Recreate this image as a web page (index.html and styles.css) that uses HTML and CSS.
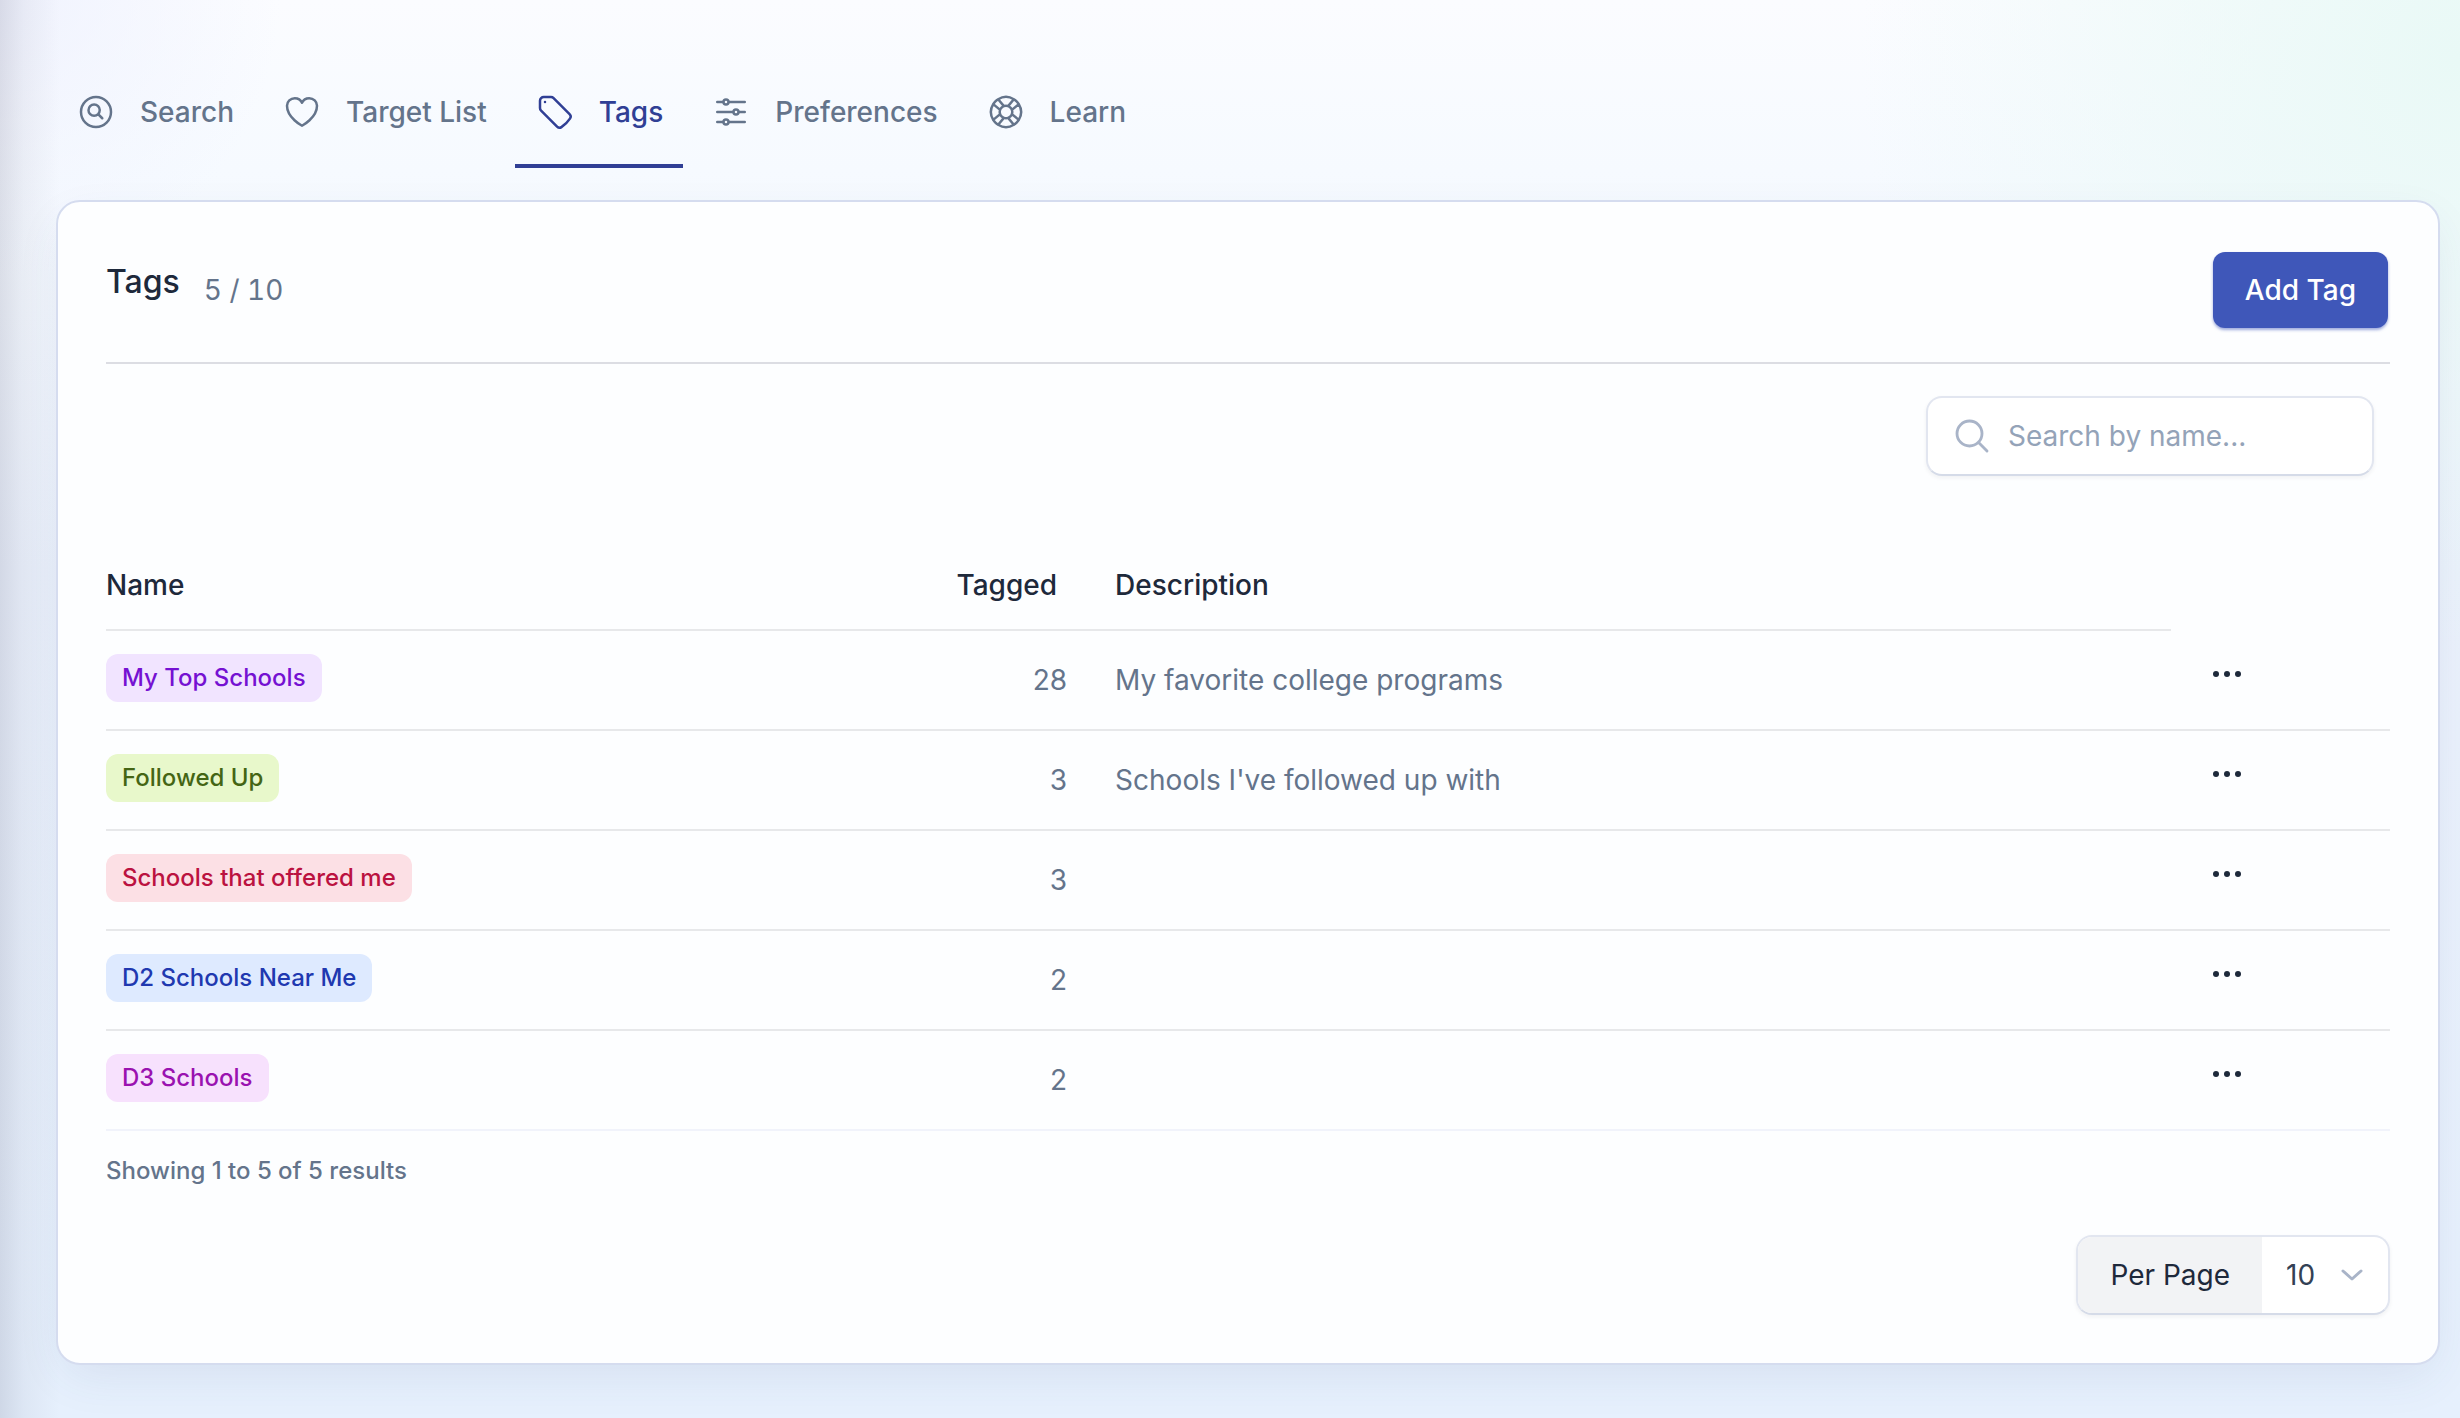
FILE: index.html
```html
<!DOCTYPE html>
<html lang="en">
<head>
  <meta charset="UTF-8">
  <meta name="viewport" content="width=device-width, initial-scale=1.0">
  <title>Tags</title>
  <link rel="stylesheet" href="styles.css">
</head>
<body>
  <div class="page">
    <nav class="tabs">
      <a href="#search" class="tab">
        <svg class="icon" viewBox="0 0 24 24"><path d="m15.75 15.75-2.489-2.489m0 0a3.375 3.375 0 1 0-4.773-4.773 3.375 3.375 0 0 0 4.774 4.774ZM21 12a9 9 0 1 1-18 0 9 9 0 0 1 18 0Z"/></svg>
        <span>Search</span>
      </a>
      <a href="#targets" class="tab">
        <svg class="icon" viewBox="0 0 24 24"><path d="M21 8.25c0-2.485-2.099-4.5-4.688-4.5-1.935 0-3.597 1.126-4.312 2.733-.715-1.607-2.377-2.733-4.313-2.733C5.1 3.75 3 5.765 3 8.25c0 7.22 9 12 9 12s9-4.78 9-12Z"/></svg>
        <span>Target List</span>
      </a>
      <a href="#tags" class="tab tab-active" aria-current="page">
        <svg class="icon" viewBox="0 0 24 24"><path d="M9.568 3H5.25A2.25 2.25 0 0 0 3 5.25v4.318c0 .597.237 1.17.659 1.591l9.581 9.581c.699.699 1.78.872 2.607.33a18.095 18.095 0 0 0 5.223-5.223c.542-.827.369-1.908-.33-2.607L11.16 3.66A2.25 2.25 0 0 0 9.568 3Z"/><path d="M6 6h.008v.008H6V6Z"/></svg>
        <span>Tags</span>
      </a>
      <a href="#preferences" class="tab">
        <svg class="icon" viewBox="0 0 24 24"><path d="M10.5 6h9.75M10.5 6a1.5 1.5 0 1 1-3 0m3 0a1.5 1.5 0 1 0-3 0M3.75 6H7.5m3 12h9.75m-9.75 0a1.5 1.5 0 0 1-3 0m3 0a1.5 1.5 0 0 0-3 0m-3.75 0H7.5m9-6h3.75m-3.75 0a1.5 1.5 0 0 1-3 0m3 0a1.5 1.5 0 0 0-3 0m-9.75 0h9.75"/></svg>
        <span>Preferences</span>
      </a>
      <a href="#learn" class="tab">
        <svg class="icon" viewBox="0 0 24 24"><path d="M16.712 4.33a9.027 9.027 0 0 1 1.652 1.306c.51.51.944 1.064 1.306 1.652M16.712 4.33l-3.448 4.138m3.448-4.138a9.014 9.014 0 0 0-9.424 0M19.67 7.288l-4.138 3.448m4.138-3.448a9.014 9.014 0 0 1 0 9.424m-4.138-5.976a3.736 3.736 0 0 0-.88-1.388 3.737 3.737 0 0 0-1.388-.88m2.268 2.268a3.765 3.765 0 0 1 0 2.528m-2.268-4.796a3.765 3.765 0 0 0-2.528 0m4.796 4.796c-.181.506-.475.982-.88 1.388a3.736 3.736 0 0 1-1.388.88m2.268-2.268 4.138 3.448m0 0a9.027 9.027 0 0 1-1.306 1.652c-.51.51-1.064.944-1.652 1.306m0 0-3.448-4.138m3.448 4.138a9.014 9.014 0 0 1-9.424 0m5.976-4.138a3.765 3.765 0 0 1-2.528 0m0 0a3.736 3.736 0 0 1-1.388-.88 3.737 3.737 0 0 1-.88-1.388m2.268 2.268L7.288 19.67m0 0a9.024 9.024 0 0 1-1.652-1.306 9.027 9.027 0 0 1-1.306-1.652m0 0 4.138-3.448M4.33 16.712a9.014 9.014 0 0 1 0-9.424m4.138 5.976a3.765 3.765 0 0 1 0-2.528m0 0c.181-.506.475-.982.88-1.388a3.736 3.736 0 0 1 1.388-.88m-2.268 2.268L4.33 7.288m6.406 1.18L7.288 4.33m0 0a9.024 9.024 0 0 0-1.652 1.306A9.025 9.025 0 0 0 4.33 7.288"/></svg>
        <span>Learn</span>
      </a>
    </nav>

    <main class="card">
      <header class="card-header">
        <div class="heading">
          <h1>Tags</h1>
          <span class="count">5 / 10</span>
        </div>
        <button type="button" class="btn-primary">Add Tag</button>
      </header>

      <div class="toolbar">
        <label class="search">
          <svg class="search-icon" viewBox="0 0 24 24"><path d="m21 21-5.197-5.197m0 0A7.5 7.5 0 1 0 5.196 5.196a7.5 7.5 0 0 0 10.607 10.607Z"/></svg>
          <input type="search" placeholder="Search by name..." aria-label="Search by name">
        </label>
      </div>

      <table class="tags-table">
        <thead>
          <tr>
            <th class="col-name">Name</th>
            <th class="col-tagged">Tagged</th>
            <th class="col-description">Description</th>
            <td class="col-actions"></td>
          </tr>
        </thead>
        <tbody>
          <tr>
            <td><span class="badge badge-violet">My Top Schools</span></td>
            <td class="number">28</td>
            <td class="description">My favorite college programs</td>
            <td class="actions"><button type="button" class="btn-more" aria-label="Actions"><svg viewBox="0 0 40 24"><circle cx="9" cy="12" r="3"/><circle cx="20" cy="12" r="3"/><circle cx="31" cy="12" r="3"/></svg></button></td>
          </tr>
          <tr>
            <td><span class="badge badge-lime">Followed Up</span></td>
            <td class="number">3</td>
            <td class="description">Schools I've followed up with</td>
            <td class="actions"><button type="button" class="btn-more" aria-label="Actions"><svg viewBox="0 0 40 24"><circle cx="9" cy="12" r="3"/><circle cx="20" cy="12" r="3"/><circle cx="31" cy="12" r="3"/></svg></button></td>
          </tr>
          <tr>
            <td><span class="badge badge-rose">Schools that offered me</span></td>
            <td class="number">3</td>
            <td class="description"></td>
            <td class="actions"><button type="button" class="btn-more" aria-label="Actions"><svg viewBox="0 0 40 24"><circle cx="9" cy="12" r="3"/><circle cx="20" cy="12" r="3"/><circle cx="31" cy="12" r="3"/></svg></button></td>
          </tr>
          <tr>
            <td><span class="badge badge-blue">D2 Schools Near Me</span></td>
            <td class="number">2</td>
            <td class="description"></td>
            <td class="actions"><button type="button" class="btn-more" aria-label="Actions"><svg viewBox="0 0 40 24"><circle cx="9" cy="12" r="3"/><circle cx="20" cy="12" r="3"/><circle cx="31" cy="12" r="3"/></svg></button></td>
          </tr>
          <tr>
            <td><span class="badge badge-fuchsia">D3 Schools</span></td>
            <td class="number">2</td>
            <td class="description"></td>
            <td class="actions"><button type="button" class="btn-more" aria-label="Actions"><svg viewBox="0 0 40 24"><circle cx="9" cy="12" r="3"/><circle cx="20" cy="12" r="3"/><circle cx="31" cy="12" r="3"/></svg></button></td>
          </tr>
        </tbody>
      </table>

      <footer class="card-footer">
        <p class="results">Showing 1 to 5 of 5 results</p>
        <div class="per-page">
          <label for="per-page">Per Page</label>
          <div class="select">
            <select id="per-page">
              <option>10</option>
              <option>25</option>
              <option>50</option>
            </select>
            <svg class="chevron" viewBox="0 0 24 12"><path d="m3 2 9 8 9-8"/></svg>
          </div>
        </div>
      </footer>
    </main>
  </div>
</body>
</html>
```
FILE: styles.css
```css
* {
  box-sizing: border-box;
}

body {
  margin: 0;
  min-height: 100vh;
  font-family: Inter, "Liberation Sans", sans-serif;
  font-size: 28px;
  line-height: 40px;
  color: #1e293b;
  background:
    linear-gradient(to right, rgba(50, 50, 80, 0.13), rgba(50, 50, 80, 0.05) 24px, rgba(50, 50, 80, 0) 60px),
    radial-gradient(circle at 100% 4%, #e9f9f6, rgba(233, 249, 246, 0) 600px),
    radial-gradient(circle at 0 0, #f0f3fe, rgba(240, 243, 254, 0) 280px),
    linear-gradient(to bottom, #fbfcff, #f6faff 12%, #ebf1fc 40%, #e6f0fd);
}

.page {
  padding: 56px 20px 54px 56px;
}

.tabs {
  display: flex;
  gap: 8px;
  margin-bottom: 32px;
}

.tab {
  display: flex;
  align-items: center;
  gap: 24px;
  height: 112px;
  padding: 4px 20px 0;
  border-bottom: 4px solid transparent;
  color: #64748b;
  font-weight: 500;
  text-decoration: none;
}

.tab-active {
  color: #303f95;
  border-bottom-color: #303f95;
}

.icon {
  width: 40px;
  height: 40px;
  fill: none;
  stroke: currentColor;
  stroke-width: 1.5;
  stroke-linecap: round;
  stroke-linejoin: round;
}

.card {
  padding: 48px;
  background: #fdfeff;
  border: 2px solid #d5dcef;
  border-radius: 24px;
  box-shadow: 0 16px 48px -8px rgba(60, 80, 120, 0.1);
}

.card-header {
  display: flex;
  justify-content: space-between;
  align-items: flex-start;
  padding-bottom: 32px;
  border-bottom: 2px solid #dcdde3;
}

.heading {
  display: flex;
  gap: 24px;
  padding-top: 8px;
}

h1 {
  margin: 0;
  font-size: 32px;
  font-weight: 500;
  line-height: 48px;
}

.count {
  padding-top: 12px;
  color: #64748b;
  font-variant-numeric: tabular-nums;
}

.btn-primary {
  height: 76px;
  margin: 2px;
  padding: 0 32px;
  border: 0;
  border-radius: 12px;
  background: #3f57b9;
  box-shadow: 0 2px 3px rgba(63, 87, 185, 0.5);
  color: #fff;
  font: inherit;
  font-weight: 500;
}

.toolbar {
  display: flex;
  justify-content: flex-end;
  padding: 32px 16px 64px 0;
}

.search {
  display: flex;
  align-items: center;
  gap: 16px;
  width: 448px;
  height: 80px;
  padding: 0 24px;
  background: #fff;
  border: 2px solid #e2e6f0;
  border-bottom-color: #d5dbe8;
  border-radius: 16px;
  box-shadow: 0 2px 4px rgba(30, 41, 59, 0.06);
}

.search-icon {
  flex: none;
  width: 40px;
  height: 40px;
  fill: none;
  stroke: #a9b4c8;
  stroke-width: 1.7;
  stroke-linecap: round;
}

.search input {
  width: 100%;
  padding: 0;
  border: 0;
  outline: 0;
  background: none;
  font: inherit;
}

.search input::placeholder {
  color: #94a3b8;
}

.tags-table {
  width: 100%;
  border-collapse: collapse;
  table-layout: fixed;
}

.tags-table th {
  height: 90px;
  padding: 0;
  border-bottom: 2px solid #e7e8ea;
  font-weight: 500;
  text-align: left;
}

.col-name {
  width: 37%;
}

.tags-table .col-tagged {
  width: 164px;
  padding-right: 58px;
  text-align: right;
}

.col-actions {
  width: 219px;
}

.tags-table tbody td {
  height: 100px;
  padding: 0;
  border-bottom: 2px solid #e7e8ea;
}

.tags-table tbody tr:last-child td {
  border-bottom-color: #f1f3fb;
}

.tags-table tbody .number {
  padding-right: 48px;
  color: #64748b;
  text-align: right;
}

.description {
  color: #64748b;
}

.badge {
  display: block;
  width: max-content;
  margin-bottom: 4px;
  padding: 4px 16px;
  border-radius: 12px;
  font-size: 24px;
  font-weight: 500;
}

.badge-violet {
  background: #f1e4ff;
  color: #7511d2;
}

.badge-lime {
  background: #e8f8cb;
  color: #446514;
}

.badge-rose {
  background: #fce0e5;
  color: #bb1240;
}

.badge-blue {
  background: #deeaff;
  color: #2038b0;
}

.badge-fuchsia {
  background: #f7e1fd;
  color: #9a12b0;
}

.btn-more {
  display: block;
  margin: 0 0 12px 36px;
  padding: 0;
  border: 0;
  background: none;
}

.btn-more svg {
  display: block;
  width: 40px;
  height: 24px;
  fill: #1e293b;
}

.results {
  margin: 0;
  padding: 20px 0 44px;
  color: #64748b;
  font-size: 24px;
  font-weight: 500;
}

.per-page {
  display: flex;
  width: max-content;
  height: 80px;
  margin-left: auto;
  border: 2px solid #e2e6f0;
  border-bottom-color: #d5dbe8;
  border-radius: 16px;
  background: #fff;
  box-shadow: 0 2px 4px rgba(30, 41, 59, 0.06);
  overflow: hidden;
}

.per-page label {
  padding: 18px 32px;
  background: #f2f3f5;
}

.select {
  display: grid;
  align-items: center;
}

.select select {
  grid-area: 1 / 1;
  width: 126px;
  height: 100%;
  padding: 0 24px;
  border: 0;
  background: none;
  color: #334155;
  font: inherit;
  appearance: none;
}

.chevron {
  grid-area: 1 / 1;
  justify-self: end;
  width: 24px;
  height: 12px;
  margin-right: 24px;
  fill: none;
  stroke: #a9b4c8;
  stroke-width: 3;
  stroke-linecap: round;
  stroke-linejoin: round;
  pointer-events: none;
}
```
